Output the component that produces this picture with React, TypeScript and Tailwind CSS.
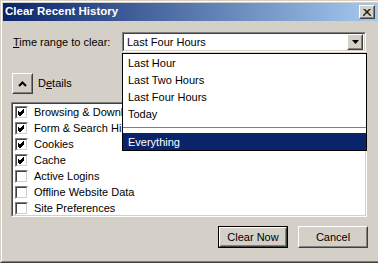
import React from "react";

const raised =
  "border border-t-white border-l-white border-r-[#404040] border-b-[#404040]";

function RaisedBox({ className, children }: { className?: string; children?: React.ReactNode }) {
  return (
    <div className={`${raised} bg-[#d4d0c8] ${className ?? ""}`}>
      <div className="w-full h-full border border-t-[#d4d0c8] border-l-[#d4d0c8] border-r-[#808080] border-b-[#808080] flex items-center justify-center">
        {children}
      </div>
    </div>
  );
}

function Sunken({ className, children }: { className?: string; children?: React.ReactNode }) {
  return (
    <div className={`border border-t-[#808080] border-l-[#808080] border-r-white border-b-white ${className ?? ""}`}>
      <div className="w-full h-full border border-t-[#404040] border-l-[#404040] border-r-[#d4d0c8] border-b-[#d4d0c8] bg-white">
        {children}
      </div>
    </div>
  );
}

function CheckBox({ checked, label }: { checked: boolean; label: string }) {
  return (
    <div className="flex items-start h-[16px]">
      <Sunken className="w-[13px] h-[13px] shrink-0">
        {checked && (
          <svg width="9" height="9" viewBox="0 0 9 9" className="block">
            <path d="M1 3.5 L3 5.5 L7 1.5 M1 4.5 L3 6.5 L7 2.5 M1 5.5 L3 7.5 L7 3.5" stroke="#000" strokeWidth="1" fill="none" shapeRendering="crispEdges" />
          </svg>
        )}
      </Sunken>
      <span className="ml-[6px] leading-[13px] whitespace-nowrap">{label}</span>
    </div>
  );
}

export default function App() {
  const items = [
    { c: true, l: "Browsing & Download History" },
    { c: true, l: "Form & Search History" },
    { c: true, l: "Cookies" },
    { c: true, l: "Cache" },
    { c: false, l: "Active Logins" },
    { c: false, l: "Offline Website Data" },
    { c: false, l: "Site Preferences" },
  ];
  return (
    <div className="w-[378px] h-[263px] bg-[#d4d0c8] relative overflow-hidden font-['Liberation_Sans',Arial,sans-serif] text-[11px] text-black">
      <div className="w-full h-full border-l border-t border-b border-l-[#d4d0c8] border-t-[#d4d0c8] border-b-[#404040]">
        <div className="w-full h-full border-l border-t border-b border-l-white border-t-white border-b-[#808080] pl-px pt-px flex flex-col">
          {/* Title bar */}
          <div className="h-[18px] flex items-center bg-[linear-gradient(to_right,#0a246a,#a6caf0)] pl-[2px] pr-[3px]">
            <span className="text-white font-bold text-[11.5px] leading-none">Clear Recent History</span>
            <RaisedBox className="ml-auto w-[16px] h-[14px]">
              <svg width="8" height="7" viewBox="0 0 8 7" className="block">
                <path d="M0.5 0 L7.5 7 M1.5 0 L8.5 7 M7.5 0 L0.5 7 M6.5 0 L-0.5 7" stroke="#000" strokeWidth="1" fill="none" />
              </svg>
            </RaisedBox>
          </div>

          {/* Time range row */}
          <div className="flex items-center mt-[11px] pl-[10px] h-[20px] relative">
            <span className="w-[109px] whitespace-nowrap">
              <span className="underline">T</span>ime range to clear:
            </span>
            <Sunken className="w-[244px] h-[20px]">
              <div className="flex items-center h-full pl-[3px] pr-px">
                <span className="whitespace-nowrap">Last Four Hours</span>
                <RaisedBox className="ml-auto w-[16px] h-[16px]">
                  <svg width="7" height="4" viewBox="0 0 7 4" className="block">
                    <path d="M0 0 H7 L3.5 4 Z" fill="#000" />
                  </svg>
                </RaisedBox>
              </div>
            </Sunken>

            {/* Dropdown */}
            <div className="absolute left-[119px] top-[21px] w-[245px] h-[98px] border border-black bg-white z-10">
              {["Last Hour", "Last Two Hours", "Last Four Hours", "Today"].map((t) => (
                <div key={t} className="h-[17px] flex items-center pl-[5px] pt-px whitespace-nowrap">
                  {t}
                </div>
              ))}
              <div className="h-[11px] flex items-center">
                <div className="w-full h-px bg-[#808080]" />
              </div>
              <div className="h-[17px] flex items-center pl-[5px] pt-px bg-[#0a246a] text-white">Everything</div>
            </div>
          </div>

          {/* Details row */}
          <div className="flex items-center mt-[21px] pl-[9px] h-[21px]">
            <RaisedBox className="w-[21px] h-[21px]">
              <svg width="9" height="6" viewBox="0 0 9 6" className="block">
                <path d="M1 5 L4.5 1.5 L8 5" stroke="#000" strokeWidth="2" fill="none" />
              </svg>
            </RaisedBox>
            <span className="ml-[5px]">
              D<span className="underline">e</span>tails
            </span>
          </div>

          {/* List */}
          <Sunken className="mt-[8px] ml-[8px] w-[356px] h-[115px]">
            <div className="pl-[2px] pt-[2px] flex flex-col">
              {items.map((it) => (
                <CheckBox key={it.l} checked={it.c} label={it.l} />
              ))}
            </div>
          </Sunken>

          {/* Buttons */}
          <div className="flex mt-[9px] pl-[215px] gap-[10px]">
            <div className="w-[70px] h-[22px] border border-black">
              <RaisedBox className="w-full h-full">Clear Now</RaisedBox>
            </div>
            <RaisedBox className="w-[70px] h-[22px]">Cancel</RaisedBox>
          </div>
        </div>
      </div>
    </div>
  );
}
